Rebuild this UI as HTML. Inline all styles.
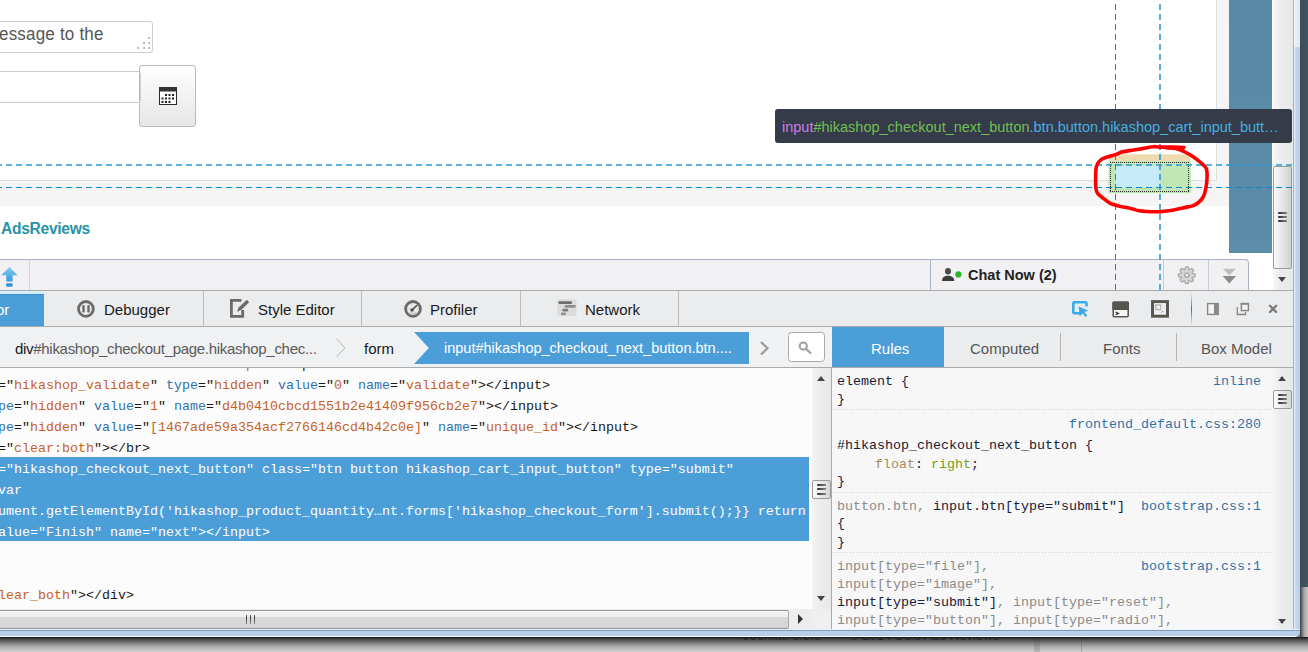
<!DOCTYPE html>
<html><head><meta charset="utf-8">
<style>
*{box-sizing:border-box}
html,body{margin:0;padding:0}
body{width:1308px;height:652px;overflow:hidden;position:relative;background:#fff;font-family:"Liberation Sans",sans-serif}
.a{position:absolute}
.mono{font-family:"Liberation Mono",monospace;font-size:13.33px;white-space:pre}
.t{position:absolute;white-space:pre;line-height:1}
</style></head><body>

<!-- ============ WEB PAGE ============ -->
<div class="a" style="left:0;top:0;width:1293px;height:290px;background:#fff;overflow:hidden">
  <!-- textarea -->
  <div class="a" style="left:-10px;top:21px;width:163px;height:32px;border:1px solid #ccc;border-radius:3px;background:#fff"></div>
  <div class="t" style="left:-1px;top:26px;font-size:17px;letter-spacing:0.2px;color:#555;transform:scaleY(1.1);transform-origin:0 14px">essage to the</div>
  <!-- input -->
  <!-- calendar button -->
  <div class="a" style="left:139px;top:65px;width:57px;height:62px;border:1px solid #bbb;border-radius:3px;background:linear-gradient(#fff,#e6e6e6)"></div>
  <div class="a" style="left:-10px;top:71px;width:151px;height:32px;border:1px solid #ccc;border-radius:0 4px 4px 0;background:transparent;border-left:0"></div>
  <div class="a" style="left:-10px;top:72px;width:149px;height:30px;background:#fff"></div>
  <!-- gray band -->
  <div class="a" style="left:0;top:180px;width:1216px;height:1px;background:#ddd"></div>
  <div class="a" style="left:0;top:181px;width:1216px;height:25px;background:#f5f5f5"></div>
  <div class="t" style="left:1px;top:221px;font-size:15.6px;letter-spacing:-0.3px;font-weight:bold;color:#2894a6">AdsReviews</div>
  <!-- right side -->
  <div class="a" style="left:1216px;top:0;width:13px;height:206px;background:#f5f5f5"></div>
  <div class="a" style="left:1216px;top:0;width:1px;height:181px;background:#ddd"></div>
  <div class="a" style="left:1229px;top:0;width:43px;height:253px;background:linear-gradient(#5889a6,#5b8ca8)"></div>
  <!-- page scrollbar -->
  <div class="a" style="left:1273px;top:0;width:20px;height:290px;background:linear-gradient(90deg,#f7f7f7,#ececec 40%,#e8e8e8)"></div>
  <div class="a" style="left:1273px;top:166px;width:19px;height:103px;border:1px solid #9a9a9a;border-radius:2px;background:linear-gradient(90deg,#fafafa,#e8e8e8 45%,#dcdcdc 75%,#cfcfcf)"></div>
  <div class="a" style="left:1278px;top:212px;width:9px;height:1.6px;border-radius:1px 0 0 1px;background:linear-gradient(90deg,#2a2a2a,#888)"></div>
  <div class="a" style="left:1278px;top:216px;width:9px;height:1.6px;border-radius:1px 0 0 1px;background:linear-gradient(90deg,#2a2a2a,#888)"></div>
  <div class="a" style="left:1278px;top:220px;width:9px;height:1.6px;border-radius:1px 0 0 1px;background:linear-gradient(90deg,#2a2a2a,#888)"></div>
  <div class="a" style="left:1278px;top:277px;width:0;height:0;border-left:4.5px solid transparent;border-right:4.5px solid transparent;border-top:5px solid #444"></div>
  <!-- chat bar -->
  <div class="a" style="left:0;top:259px;width:1249px;height:31px;border-top:1px solid #a9b4c2;border-right:1px solid #a9b4c2;border-top-right-radius:4px;background:#f1f1f3"></div>
  <div class="a" style="left:29px;top:260px;width:1px;height:30px;background:#cfd3da"></div>
  <div class="a" style="left:930px;top:260px;width:1px;height:30px;background:#a9b4c2"></div>
  <div class="t" style="left:968px;top:268px;font-size:14.5px;font-weight:bold;color:#222">Chat Now (2)</div>
  <div class="a" style="left:1163px;top:260px;width:1px;height:30px;background:#c9cdd3"></div>
  <div class="a" style="left:1208px;top:260px;width:1px;height:30px;background:#c9cdd3"></div>
  
</div>

<!-- ============ DEVTOOLS TOOLBAR ============ -->
<div class="a" style="left:0;top:290px;width:1293px;height:37px;background:#ebeced;border-top:1px solid #aaa;border-bottom:1px solid #aaa"></div>
<div class="a" style="left:0;top:291px;width:44px;height:35px;background:linear-gradient(#3d8dcf 0,#3d8dcf 1px,#4c9ed9 1px,#4c9ed9 33px,#3f8fd0 33px);border-top:3px solid #d3f0fc"></div>
<div class="t" style="left:-4px;top:302px;font-size:15px;color:#fff">or</div>
<div class="a" style="left:203px;top:291px;width:1px;height:35px;background:#bbb"></div>
<div class="a" style="left:361px;top:291px;width:1px;height:35px;background:#bbb"></div>
<div class="a" style="left:520px;top:291px;width:1px;height:35px;background:#bbb"></div>
<div class="a" style="left:678px;top:291px;width:1px;height:35px;background:#bbb"></div>
<div class="t" style="left:104px;top:302px;font-size:15px;color:#18191a">Debugger</div>
<div class="t" style="left:258px;top:302px;font-size:15px;color:#18191a">Style Editor</div>
<div class="t" style="left:430px;top:302px;font-size:15px;color:#18191a">Profiler</div>
<div class="t" style="left:585px;top:302px;font-size:15px;color:#18191a">Network</div>

<!-- ============ BREADCRUMBS ============ -->
<div class="a" style="left:0;top:327px;width:832px;height:41px;background:#f0f1f2;border-bottom:1px solid #aaa"></div>
<div class="t" style="left:15px;top:341px;font-size:15px;letter-spacing:-0.3px;color:#5a5a5a"><span style="color:#18191a">div</span>#hikashop_checkout_page.hikashop_chec...</div>
<div class="t" style="left:364px;top:341px;font-size:15px;color:#18191a">form</div>

<!-- ============ PANEL TABS ============ -->
<div class="a" style="left:832px;top:327px;width:461px;height:41px;background:#ebeced;border-bottom:1px solid #aaa"></div>
<div class="a" style="left:832px;top:327px;width:112px;height:40px;background:#4c9ed9"></div>
<div class="t" style="left:871px;top:341px;font-size:15px;color:#fff">Rules</div>
<div class="t" style="left:970px;top:341px;font-size:15px;color:#555">Computed</div>
<div class="t" style="left:1103px;top:341px;font-size:15px;color:#555">Fonts</div>
<div class="t" style="left:1201px;top:341px;font-size:15px;color:#555">Box Model</div>

<!-- ============ CODE PANEL ============ -->
<div class="a" style="left:0;top:368px;width:831px;height:261px;background:#fcfcfc;overflow:hidden">
<div class="a" style="left:0;top:89px;width:809px;height:84px;background:#4c9ed9"></div>
<div class="a" style="left:0;top:-368px">
<div class="mono a" style="left:-2px;top:354px;height:21px;line-height:21px">                               <span style="color:#c8621c">p</span><span style="color:#18191a">"&gt;&lt;/input&gt;</span></div>
<div class="mono a" style="left:-2px;top:375px;height:21px;line-height:21px"><span style="color:#18191a">="</span><span style="color:#c8621c">hikashop_validate</span><span style="color:#18191a">" </span><span style="color:#2f72ab">type</span><span style="color:#18191a">="</span><span style="color:#c8621c">hidden</span><span style="color:#18191a">" </span><span style="color:#2f72ab">value</span><span style="color:#18191a">="</span><span style="color:#c8621c">0</span><span style="color:#18191a">" </span><span style="color:#2f72ab">name</span><span style="color:#18191a">="</span><span style="color:#c8621c">validate</span><span style="color:#18191a">"&gt;&lt;/input&gt;</span></div>
<div class="mono a" style="left:-2px;top:396px;height:21px;line-height:21px"><span style="color:#2f72ab">pe</span><span style="color:#18191a">="</span><span style="color:#c8621c">hidden</span><span style="color:#18191a">" </span><span style="color:#2f72ab">value</span><span style="color:#18191a">="</span><span style="color:#c8621c">1</span><span style="color:#18191a">" </span><span style="color:#2f72ab">name</span><span style="color:#18191a">="</span><span style="color:#c8621c">d4b0410cbcd1551b2e41409f956cb2e7</span><span style="color:#18191a">"&gt;&lt;/input&gt;</span></div>
<div class="mono a" style="left:-2px;top:417px;height:21px;line-height:21px"><span style="color:#2f72ab">pe</span><span style="color:#18191a">="</span><span style="color:#c8621c">hidden</span><span style="color:#18191a">" </span><span style="color:#2f72ab">value</span><span style="color:#18191a">="</span><span style="color:#c8621c">[1467ade59a354acf2766146cd4b42c0e]</span><span style="color:#18191a">" </span><span style="color:#2f72ab">name</span><span style="color:#18191a">="</span><span style="color:#c8621c">unique_id</span><span style="color:#18191a">"&gt;&lt;/input&gt;</span></div>
<div class="mono a" style="left:-2px;top:438px;height:21px;line-height:21px"><span style="color:#18191a">="</span><span style="color:#c8621c">clear:both</span><span style="color:#18191a">"&gt;&lt;/br&gt;</span></div>
<div class="mono a" style="left:-2px;top:459px;height:21px;line-height:21px"><span style="color:#fff">="hikashop_checkout_next_button" class="btn button hikashop_cart_input_button" type="submit"</span></div>
<div class="mono a" style="left:-2px;top:480px;height:21px;line-height:21px"><span style="color:#fff">var</span></div>
<div class="mono a" style="left:-2px;top:501px;height:21px;line-height:21px"><span style="color:#fff">ument.getElementById('hikashop_product_quantity…nt.forms['hikashop_checkout_form'].submit();}} return</span></div>
<div class="mono a" style="left:-2px;top:522px;height:21px;line-height:21px"><span style="color:#fff">alue="Finish" name="next"&gt;&lt;/input&gt;</span></div>
<div class="mono a" style="left:-2px;top:543px;height:21px;line-height:21px"></div>
<div class="mono a" style="left:-2px;top:564px;height:21px;line-height:21px"></div>
<div class="mono a" style="left:-2px;top:585px;height:21px;line-height:21px"><span style="color:#c8621c">lear_both</span><span style="color:#18191a">"&gt;&lt;/div&gt;</span></div>
</div>
</div>

<!-- ============ RULES PANEL ============ -->
<div class="a" style="left:831px;top:368px;width:1px;height:261px;background:#aaa"></div>
<div class="a" style="left:832px;top:368px;width:461px;height:261px;background:#f7f7f7;overflow:hidden"></div>
<div class="mono a" style="left:837px;top:371px;height:21px;line-height:21px"><span style="color:#15213a">element {</span></div>
<div class="mono a" style="left:837px;top:389px;height:21px;line-height:21px"><span style="color:#15213a">}</span></div>
<div class="mono a" style="left:837px;top:435px;height:21px;line-height:21px"><span style="color:#15213a">#hikashop_checkout_next_button {</span></div>
<div class="mono a" style="left:875px;top:454px;height:21px;line-height:21px"><span style="color:#a88c5c">float</span><span style="color:#15213a">: </span><span style="color:#7e9b1c">right</span><span style="color:#15213a">;</span></div>
<div class="mono a" style="left:837px;top:471px;height:21px;line-height:21px"><span style="color:#15213a">}</span></div>
<div class="mono a" style="left:837px;top:496px;height:21px;line-height:21px"><span style="color:#8b8b8b">button.btn, </span><span style="color:#15213a">input.btn[type="submit"]</span></div>
<div class="mono a" style="left:837px;top:513px;height:21px;line-height:21px"><span style="color:#15213a">{</span></div>
<div class="mono a" style="left:837px;top:532px;height:21px;line-height:21px"><span style="color:#15213a">}</span></div>
<div class="mono a" style="left:837px;top:556px;height:21px;line-height:21px"><span style="color:#8b8b8b">input[type="file"],</span></div>
<div class="mono a" style="left:837px;top:574px;height:21px;line-height:21px"><span style="color:#8b8b8b">input[type="image"],</span></div>
<div class="mono a" style="left:837px;top:592px;height:21px;line-height:21px"><span style="color:#15213a">input[type="submit"]</span><span style="color:#8b8b8b">, input[type="reset"],</span></div>
<div class="mono a" style="left:837px;top:610px;height:21px;line-height:21px"><span style="color:#8b8b8b">input[type="button"], input[type="radio"],</span></div>
<div class="mono a" style="left:1213px;top:371px;height:21px;line-height:21px;color:#2f72ab">inline</div>
<div class="mono a" style="left:1069px;top:414px;height:21px;line-height:21px;color:#2f72ab">frontend_default.css:280</div>
<div class="mono a" style="left:1141px;top:496px;height:21px;line-height:21px;color:#2f72ab">bootstrap.css:1</div>
<div class="mono a" style="left:1141px;top:556px;height:21px;line-height:21px;color:#2f72ab">bootstrap.css:1</div>
<div class="a" style="left:832px;top:409px;width:440px;height:1px;background-image:linear-gradient(90deg,#c9d3dc 50%,transparent 50%);background-size:3px 1px"></div>
<div class="a" style="left:832px;top:492px;width:440px;height:1px;background-image:linear-gradient(90deg,#c9d3dc 50%,transparent 50%);background-size:3px 1px"></div>
<div class="a" style="left:832px;top:552px;width:440px;height:1px;background-image:linear-gradient(90deg,#c9d3dc 50%,transparent 50%);background-size:3px 1px"></div>

<!-- ============ HIGHLIGHTER ============ -->
<svg class="a" style="left:0;top:0" width="1308" height="652" viewBox="0 0 1308 652">
  <rect x="1108.5" y="154.3" width="82" height="6.7" fill="#edd5a6" opacity="0.9"/>
  <rect x="1108.5" y="161" width="82.5" height="32.2" fill="#b7e3a9" opacity="0.85"/>
  <rect x="1116" y="166" width="43.8" height="21.3" fill="#c8ebfb"/>
  <defs><pattern id="dots" x="0" y="0" width="2" height="2" patternUnits="userSpaceOnUse"><rect x="0" y="0" width="1" height="1" fill="#2a2a2a"/></pattern></defs>
  <rect x="1110" y="162" width="80" height="1" fill="url(#dots)"/>
  <rect x="1110" y="190" width="80" height="1" fill="url(#dots)" transform="translate(0 1)"/>
  <rect x="1110" y="162" width="1" height="30" fill="url(#dots)"/>
  <rect x="1188" y="162" width="1" height="30" fill="url(#dots)"/>
  <path d="M0 165 H1293" stroke="#2a98dc" stroke-width="1.6" stroke-dasharray="6 4" stroke-dashoffset="4"/>
  <path d="M0 187.5 H1293" stroke="#0a88d2" stroke-width="1" stroke-dasharray="6 4" stroke-dashoffset="4"/>
  <path d="M1115.5 0 V290" stroke="#0a88d2" stroke-width="1" stroke-dasharray="6 4" stroke-dashoffset="6"/>
  <path d="M1160 0 V290" stroke="#2a98dc" stroke-width="1.6" stroke-dasharray="6 4" stroke-dashoffset="6"/>
</svg>
<!-- tooltip -->
<div class="a" style="left:775px;top:109px;width:517px;height:34px;background:#353b48;border-radius:3px"></div>
<div class="t" style="left:782px;top:120px;font-size:14.5px"><span style="color:#cc7fe6">input</span><span style="color:#70bf53">#hikashop_checkout_next_button</span><span style="color:#46afe3">.btn.button.hikashop_cart_input_butt…</span></div>
<!-- red hand-drawn ellipse -->
<svg class="a" style="left:0;top:0" width="1308" height="652" viewBox="0 0 1308 652">
  <path d="M1184.0 147.5 C1182.0 147.4 1176.5 147.2 1172.5 147.1 C1168.4 147.1 1163.1 147.2 1159.8 147.1 C1156.5 147.1 1155.8 146.4 1152.9 146.7 C1150.0 146.9 1146.2 148.0 1142.5 148.6 C1138.9 149.2 1134.5 149.8 1131.0 150.4 C1127.6 150.9 1124.3 151.4 1121.8 152.1 C1119.3 152.8 1118.4 153.6 1116.1 154.4 C1113.8 155.2 1110.5 155.8 1108.0 156.7 C1105.5 157.5 1102.9 158.2 1101.1 159.6 C1099.3 160.9 1097.9 163.0 1097.1 164.7 C1096.2 166.5 1096.2 167.7 1095.9 169.9 C1095.7 172.1 1095.6 174.9 1095.6 178.0 C1095.6 181.0 1095.6 185.7 1095.9 188.3 C1096.3 190.9 1096.6 192.0 1097.7 193.5 C1098.7 195.0 1100.2 195.9 1102.3 197.5 C1104.4 199.2 1107.4 201.9 1110.3 203.3 C1113.2 204.7 1116.1 205.3 1119.5 206.2 C1123.0 207.0 1127.8 207.7 1131.0 208.5 C1134.3 209.2 1136.0 210.3 1139.1 210.8 C1142.2 211.3 1145.8 211.4 1149.4 211.6 C1153.1 211.7 1157.1 211.8 1160.9 211.6 C1164.8 211.3 1168.8 210.8 1172.5 210.2 C1176.1 209.6 1179.4 208.7 1182.8 207.9 C1186.3 207.1 1190.5 206.6 1193.2 205.6 C1195.9 204.6 1197.2 203.7 1198.9 202.1 C1200.7 200.6 1202.4 198.7 1203.5 196.4 C1204.7 194.1 1205.3 191.2 1205.8 188.3 C1206.4 185.5 1206.9 182.4 1207.0 179.1 C1207.1 175.9 1207.4 171.5 1206.4 168.8 C1205.4 166.1 1203.4 165.0 1201.2 163.0 C1199.0 161.0 1196.0 158.6 1193.2 156.7 C1190.3 154.8 1186.8 152.9 1184.0 151.5 C1181.1 150.2 1179.0 149.2 1175.9 148.6 C1172.8 148.0 1167.3 148.0 1165.6 147.8" fill="none" stroke="#f00" stroke-width="3.6" stroke-linecap="round" stroke-linejoin="round"/>
</svg>
<!-- ============ ICONS ============ -->
<svg class="a" style="left:0;top:0" width="1308" height="652" viewBox="0 0 1308 652">
  <!-- calendar -->
  <rect x="159.5" y="87.5" width="17" height="17" fill="#fff" stroke="#2a2a2a" stroke-width="1"/>
  <rect x="159" y="87" width="18" height="4.5" fill="#333"/>
  <g fill="#222">
    <rect x="165" y="94" width="2" height="2"/><rect x="168.5" y="94" width="2" height="2"/><rect x="172" y="94" width="2" height="2"/>
    <rect x="161.5" y="97.5" width="2" height="2"/><rect x="165" y="97.5" width="2" height="2"/><rect x="168.5" y="97.5" width="2" height="2"/><rect x="172" y="97.5" width="2" height="2"/>
    <rect x="161.5" y="101" width="2" height="2"/><rect x="165" y="101" width="2" height="2"/><rect x="168.5" y="101" width="2" height="2"/>
  </g>
  <!-- textarea resize grip -->
  <g fill="#bdbdbd">
    <rect x="148" y="37" width="2" height="2"/>
    <rect x="143" y="42" width="2" height="2"/><rect x="148" y="42" width="2" height="2"/>
    <rect x="137" y="47" width="2" height="2"/><rect x="143" y="47" width="2" height="2"/><rect x="148" y="47" width="2" height="2"/>
  </g>
  <!-- up arrow -->
  <defs>
    <linearGradient id="ua" x1="0" y1="0" x2="0" y2="1"><stop offset="0" stop-color="#86cdf3"/><stop offset="1" stop-color="#3b98dc"/></linearGradient>
  </defs>
  <path d="M9.4 267 L17.5 275.3 L12.6 275.3 L12.6 281.6 L6.2 281.6 L6.2 275.3 L1.2 275.3 Z" fill="url(#ua)"/>
  <rect x="6.2" y="283.2" width="6.4" height="3.5" rx="0.8" fill="#3391d8"/>
  <!-- person -->
  <ellipse cx="948" cy="271.3" rx="3" ry="3.3" fill="#4a4a4a"/>
  <path d="M942 281 C942 277.5 944.5 275.8 948 275.8 C951.5 275.8 954.3 277.5 954.3 281 Z" fill="#3c3c3c"/>
  <circle cx="958.4" cy="274.4" r="3.1" fill="#2fb52a"/>
  <!-- gear -->
  <g transform="translate(1186.8 275.2)">
    <g fill="#a8a8a8">
      <circle r="6.6"/>
      <rect x="-2.3" y="-9" width="4.6" height="18" rx="1.6"/>
      <rect x="-2.3" y="-9" width="4.6" height="18" rx="1.6" transform="rotate(45)"/>
      <rect x="-2.3" y="-9" width="4.6" height="18" rx="1.6" transform="rotate(90)"/>
      <rect x="-2.3" y="-9" width="4.6" height="18" rx="1.6" transform="rotate(135)"/>
    </g>
    <g fill="#d6d6d8">
      <circle r="5.4"/>
      <rect x="-1.2" y="-7.8" width="2.4" height="15.6" rx="1"/>
      <rect x="-1.2" y="-7.8" width="2.4" height="15.6" rx="1" transform="rotate(45)"/>
      <rect x="-1.2" y="-7.8" width="2.4" height="15.6" rx="1" transform="rotate(90)"/>
      <rect x="-1.2" y="-7.8" width="2.4" height="15.6" rx="1" transform="rotate(135)"/>
    </g>
    <circle r="2.6" fill="#9c9c9c"/>
    <rect x="-1.2" y="-1.2" width="2.4" height="2.4" fill="#fff"/>
  </g>
  <!-- double arrow -->
  <path d="M1222.7 268.7 L1236 268.7 L1229.35 275.2 Z" fill="#c0c0c0"/>
  <path d="M1222.7 276 L1236 276 L1229.35 283.6 Z" fill="#8a8a8a"/>

  <!-- pause (debugger) -->
  <circle cx="85.9" cy="308.9" r="7.4" fill="none" stroke="#6b6b6b" stroke-width="2.8"/>
  <rect x="82.3" y="305" width="2.4" height="7.6" rx="1.2" fill="#6b6b6b"/>
  <rect x="87.3" y="305" width="2.4" height="7.6" rx="1.2" fill="#6b6b6b"/>
  <!-- style editor -->
  <path d="M241.5 300.3 L231.4 300.3 L231.4 316.4 L242.7 316.4 L242.7 310" fill="none" stroke="#6b6b6b" stroke-width="2.8"/>
  <path d="M237 311.8 L238.6 307.4 L246.8 299.8 L249.2 302.3 L241.2 310 Z" fill="#6b6b6b"/>
  <!-- profiler -->
  <circle cx="413" cy="308.9" r="7.4" fill="none" stroke="#6b6b6b" stroke-width="2.8"/>
  <path d="M412.2 309.8 L416.6 305.6" stroke="#555" stroke-width="1.6" stroke-linecap="round"/><circle cx="412" cy="310" r="1.8" fill="#555"/>
  <path d="M409.5 312.5 Q413 314.5 416.5 312.5" stroke="#c4c4c4" stroke-width="1.6" fill="none"/>
  <g fill="#c8c8c8"><rect x="407.5" y="308.2" width="2" height="1"/><rect x="416.8" y="308.2" width="2" height="1"/><rect x="410.8" y="304" width="1" height="1.6"/></g>
  <!-- network -->
  <rect x="557.3" y="299.2" width="19.3" height="16.8" rx="2.5" fill="#dcdcdc"/>
  <rect x="558.3" y="301.3" width="13.8" height="2.8" rx="1.4" fill="#6e6e6e"/>
  <rect x="564.6" y="305" width="11.2" height="2.8" rx="1.4" fill="#8e8e8e"/>
  <rect x="562.2" y="308.8" width="6" height="2.8" rx="1.4" fill="#7c7c7c"/>
  <rect x="561" y="312.6" width="5" height="2.6" rx="1.3" fill="#8e8e8e"/>

  <!-- pick -->
  <path d="M1080 313.2 L1074.3 313.2 Q1073.3 313.2 1073.3 312.2 L1073.3 303.2 Q1073.3 302.2 1074.3 302.2 L1085.5 302.2 Q1086.5 302.2 1086.5 303.2 L1086.5 306.5" fill="none" stroke="#3aacea" stroke-width="2.6"/>
  <path d="M1078.7 306.5 L1088.3 310.5 L1084.4 312 L1087.2 315.6 L1085.6 317.2 L1082.7 313.6 L1079.6 316.2 Z" fill="#3aacea"/>
  <!-- console -->
  <rect x="1113.2" y="302.2" width="15" height="14.6" rx="1" fill="#f4f4f2" stroke="#5a5a55" stroke-width="1.6"/>
  <rect x="1112.4" y="301.4" width="16.6" height="8.6" rx="1" fill="#55564f"/>
  <path d="M1115.5 312 L1118.5 313.4 L1115.5 314.8" fill="none" stroke="#333" stroke-width="1.2"/>
  <!-- screenshot -->
  <rect x="1152.5" y="301.6" width="15" height="14.6" fill="none" stroke="#55554f" stroke-width="2.9"/>
  <rect x="1155.8" y="304.9" width="4.9" height="4.7" fill="none" stroke="#666" stroke-width="0.9" stroke-dasharray="1 0.8"/>
  <path d="M1161.5 312.5 L1163 311" stroke="#888" stroke-width="1"/>
  <!-- separator -->
  <defs><linearGradient id="sep" x1="0" y1="0" x2="0" y2="1"><stop offset="0" stop-color="#ebeced"/><stop offset="0.5" stop-color="#666"/><stop offset="1" stop-color="#ebeced"/></linearGradient></defs>
  <rect x="1191" y="293" width="1" height="32" fill="url(#sep)"/>
  <!-- dock side -->
  <rect x="1207.6" y="303.6" width="10.6" height="10.8" fill="#f4f4f4" stroke="#858585" stroke-width="1.4"/>
  <rect x="1214" y="303" width="5" height="12" fill="#8a8a8a"/>
  <!-- window -->
  <rect x="1241.4" y="303.6" width="7" height="7" fill="#f2f2f2" stroke="#858585" stroke-width="1.4"/>
  <rect x="1240.6" y="302.9" width="8.4" height="1.8" fill="#858585"/>
  <path d="M1237.3 307 L1237.3 314.5 L1245.5 314.5 L1245.5 312" fill="none" stroke="#858585" stroke-width="1.3"/>
  <!-- close -->
  <path d="M1270 305.8 L1276.2 312 M1276.2 305.8 L1270 312" stroke="#7a7a7a" stroke-width="2.3" stroke-linecap="round"/>

  <!-- breadcrumb chevrons -->
  <path d="M336.5 338.8 L345 347.8 L336.5 356.8" fill="none" stroke="#b4b4b4" stroke-width="1"/>
  <path d="M761 342 L767.5 348.2 L761 354.5" fill="none" stroke="#9a9a9a" stroke-width="2.2"/>
  <!-- search -->
  <rect x="788.5" y="332.5" width="36" height="29" rx="3" fill="#fff" stroke="#a9a9a9" stroke-width="1"/>
  <circle cx="803.3" cy="346" r="3.6" fill="none" stroke="#a0a0a0" stroke-width="2"/>
  <path d="M805.8 348.6 L810.5 353" stroke="#a0a0a0" stroke-width="2.2" stroke-linecap="round"/>
  <!-- selected crumb -->
  <path d="M414 332 L749 332 L749 364 L414 364 L428.8 348 Z" fill="#4c9ed9"/>
</svg>
<div class="t" style="left:444px;top:341px;font-size:14.5px;color:#fff">input#hikashop_checkout_next_button.btn....</div>
<div class="a" style="left:1060px;top:333px;width:1px;height:28px;background:#b4b4b4"></div>
<div class="a" style="left:1176px;top:333px;width:1px;height:28px;background:#b4b4b4"></div>
<!-- ============ SCROLLBARS ============ -->
<!-- code v-scroll -->
<div class="a" style="left:812px;top:368px;width:19px;height:241px;background:linear-gradient(90deg,#f4f4f4,#ececec 40%,#e9e9e9)"></div>
<div class="a" style="left:817px;top:376px;width:0;height:0;border-left:4.5px solid transparent;border-right:4.5px solid transparent;border-bottom:5px solid #444"></div>
<div class="a" style="left:817px;top:596px;width:0;height:0;border-left:4.5px solid transparent;border-right:4.5px solid transparent;border-top:5px solid #444"></div>
<div class="a" style="left:812px;top:480px;width:19px;height:19px;border:1px solid #9a9a9a;border-radius:2px;background:linear-gradient(90deg,#fbfbfb,#e6e6e6 60%,#d4d4d4)"></div>
<div class="a" style="left:817px;top:484px;width:9px;height:1.6px;border-radius:1px 0 0 1px;background:linear-gradient(90deg,#2a2a2a,#888)"></div>
<div class="a" style="left:817px;top:488px;width:9px;height:1.6px;border-radius:1px 0 0 1px;background:linear-gradient(90deg,#2a2a2a,#888)"></div>
<div class="a" style="left:817px;top:493px;width:9px;height:1.6px;border-radius:1px 0 0 1px;background:linear-gradient(90deg,#2a2a2a,#888)"></div>
<!-- code h-scroll -->
<div class="a" style="left:0;top:609px;width:831px;height:20px;background:#ededed"></div>
<div class="a" style="left:0;top:610px;width:789px;height:19px;border-top:1px solid #999;border-bottom:1px solid #999;border-right:1px solid #aaa;border-radius:0 2px 2px 0;background:linear-gradient(#f2f2f2 0,#f0f0f0 6px,#d9d9d9 6px,#d6d6d6 16px,#c4c4c4 17px)"></div>
<div class="a" style="left:245.5px;top:615px;width:1.6px;height:8.5px;border-radius:1px 1px 0 0;background:linear-gradient(#2a2a2a,#888)"></div>
<div class="a" style="left:249.5px;top:615px;width:1.6px;height:8.5px;border-radius:1px 1px 0 0;background:linear-gradient(#2a2a2a,#888)"></div>
<div class="a" style="left:253.5px;top:615px;width:1.6px;height:8.5px;border-radius:1px 1px 0 0;background:linear-gradient(#2a2a2a,#888)"></div>
<div class="a" style="left:798px;top:614px;width:0;height:0;border-top:5px solid transparent;border-bottom:5px solid transparent;border-left:5px solid #333"></div>
<div class="a" style="left:812px;top:609px;width:19px;height:20px;background:#efefef"></div>
<!-- rules v-scroll -->
<div class="a" style="left:1273px;top:368px;width:20px;height:261px;background:linear-gradient(90deg,#f4f4f4,#ececec 40%,#e9e9e9)"></div>
<div class="a" style="left:1278px;top:376px;width:0;height:0;border-left:4.5px solid transparent;border-right:4.5px solid transparent;border-bottom:5px solid #444"></div>
<div class="a" style="left:1278px;top:619px;width:0;height:0;border-left:4.5px solid transparent;border-right:4.5px solid transparent;border-top:5px solid #444"></div>
<div class="a" style="left:1273px;top:390px;width:19px;height:19px;border:1px solid #9a9a9a;border-radius:2px;background:linear-gradient(90deg,#fbfbfb,#e6e6e6 60%,#d4d4d4)"></div>
<div class="a" style="left:1278px;top:394px;width:9px;height:1.6px;border-radius:1px 0 0 1px;background:linear-gradient(90deg,#2a2a2a,#888)"></div>
<div class="a" style="left:1278px;top:398px;width:9px;height:1.6px;border-radius:1px 0 0 1px;background:linear-gradient(90deg,#2a2a2a,#888)"></div>
<div class="a" style="left:1278px;top:402px;width:9px;height:1.6px;border-radius:1px 0 0 1px;background:linear-gradient(90deg,#2a2a2a,#888)"></div>

<!-- ============ WINDOW FRAME ============ -->
<div class="a" style="left:1294px;top:630px;width:6px;height:7px;background:#8a8a8a"></div>
<div class="a" style="left:1293px;top:0;width:7px;height:637px;border-bottom-right-radius:6px;background:linear-gradient(90deg,#9fb6cc 0,#9fb6cc 1px,#e6f0fb 1px,#c0d7f0 3px,#b6cfea)"></div>
<div class="a" style="left:0;top:629px;width:1300px;height:8px;background:linear-gradient(#eef2f6 0,#eef2f6 1px,#7d9bbd 1px,#7d9bbd 2px,#b8d0ea 2px,#b6cfe9 7px,#f6f9fc 7px);border-radius:0 0 6px 0"></div>
<div class="a" style="left:1300px;top:0;width:8px;height:652px;background:linear-gradient(90deg,#4a4a4a,#3a4f5a 3px,#3c5868)"></div>
<div class="a" style="left:1300px;top:587px;width:8px;height:65px;background:linear-gradient(90deg,#3a3a3a,#8a8a8a 3px,#b0b0b0 5px,#c4c4c4)"></div>
<div class="a" style="left:1293px;top:0;width:7px;height:47px;background:linear-gradient(90deg,#a7b7c6 0,#a7b7c6 1px,#f4f8fd 1px,#e2eefa 3px,#dceaf8)"></div>
<div class="a" style="left:0;top:637px;width:1308px;height:15px;overflow:hidden;background:#d0d0d0">
  <div class="t" style="left:743px;top:-8px;font-size:13px;color:#222">Joomla! 3.3.0</div>
  <div class="t" style="left:849px;top:-8px;font-size:13px;color:#222">© 2014 Solo Ads Reviews</div><div class="t" style="left:1016px;top:-8px;font-size:9px;color:#222">▼</div>
  <div class="a" style="left:1034px;top:0;width:6px;height:15px;background:#b8b8b8"></div>
  <div class="a" style="left:1081px;top:0;width:1px;height:15px;background:#aaa"></div>
  <div class="a" style="left:0;top:0;width:1308px;height:15px;background:linear-gradient(rgba(20,20,20,1),rgba(40,40,40,.85) 2px,rgba(60,60,60,.55) 6px,rgba(80,80,80,.25) 10px,rgba(80,80,80,.1) 13px,rgba(80,80,80,0))"></div>
</div>
</body></html>
